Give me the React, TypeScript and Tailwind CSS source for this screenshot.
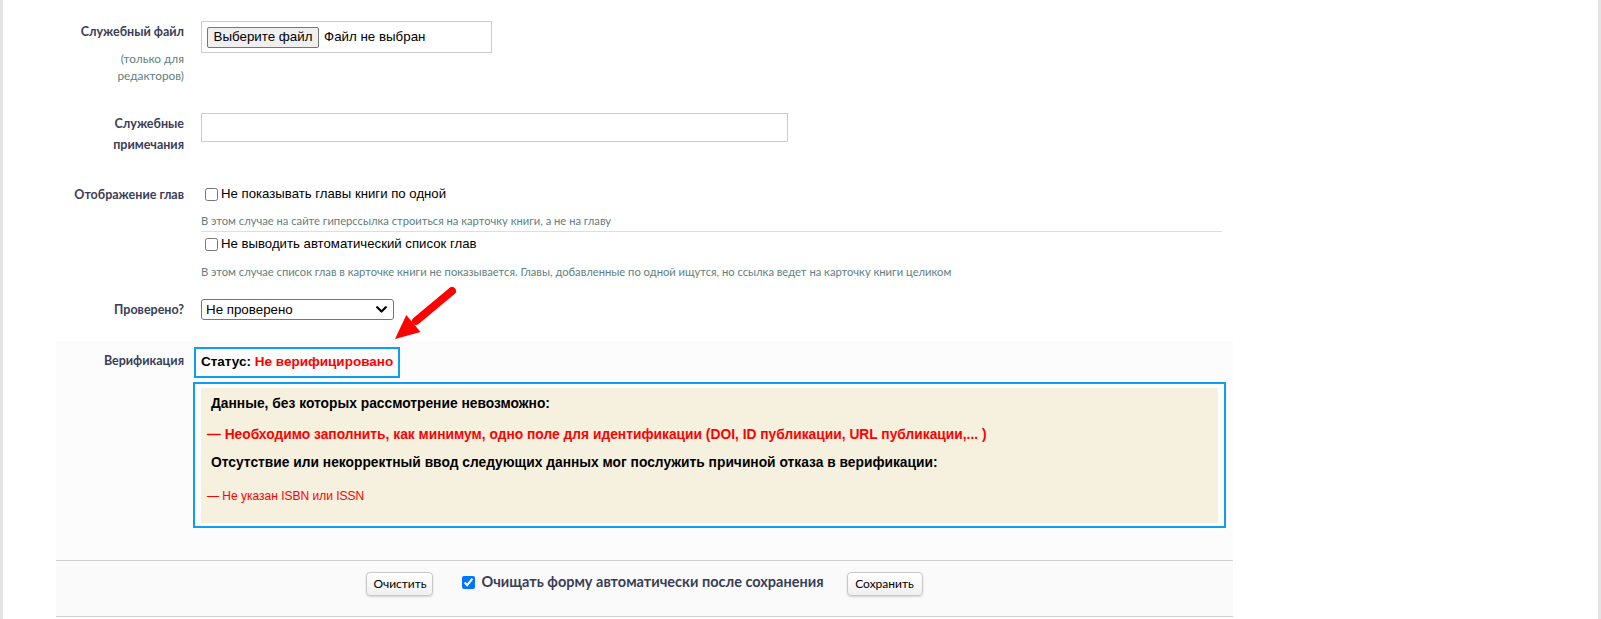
import React from "react";

const labelCls =
  "font-['Lato','Open_Sans',sans-serif] font-bold text-[12.5px] text-[#393d56]";
const helpCls =
  "font-['Lato','Open_Sans',sans-serif] text-[11.2px] leading-[16px] text-[#5e7f7f]";
const btnCls =
  "h-[24px] border border-[#c8c8c8] rounded-[4px] bg-gradient-to-b from-white to-[#f0f0f0] shadow-[0_1px_2px_rgba(0,0,0,0.15)] font-['Lato','Open_Sans',sans-serif] text-[12px] text-black flex items-center justify-center";

export default function App() {
  return (
    <div className="relative min-h-[619px] w-full bg-white border-l-[3px] border-r-[3px] border-[#e4e4e4] font-['Liberation_Sans',Arial,sans-serif] text-black">
      <div className="ml-[53px] w-[1177px]">
        {/* Row 1 */}
        <div className="flex pt-[21px]">
          <div className="w-[145px] pr-[17px] pt-[1px] text-right">
            <div className={`${labelCls} leading-[20px]`}>Служебный файл</div>
            <div className="mt-[8px] font-['Lato','Open_Sans',sans-serif] text-[11.8px] leading-[17px] text-[#5e7f7f]">
              (только для
              <br />
              редакторов)
            </div>
          </div>
          <div>
            <div className="w-[291px] h-[32px] border border-[#cccccc] flex items-center pl-[5px] text-[13.33px]">
              <span className="h-[21px] w-[112px] border border-[#767676] bg-[#efefef] rounded-[2px] flex items-center justify-center">
                Выберите файл
              </span>
              <span className="ml-[5px]">Файл не выбран</span>
            </div>
          </div>
        </div>

        {/* Row 2 */}
        <div className="flex mt-[29px]">
          <div className="w-[145px] pr-[17px] pt-[1px] text-right">
            <div className={`${labelCls} leading-[20.5px]`}>
              Служебные
              <br />
              примечания
            </div>
          </div>
          <div className="w-[587px] h-[29px] border border-[#cccccc] bg-white" />
        </div>

        {/* Row 3 */}
        <div className="flex mt-[29px]">
          <div className="w-[145px] pr-[17px] pt-[1px] text-right">
            <div className={`${labelCls} leading-[20px]`}>Отображение глав</div>
          </div>
          <div className="w-[1021px]">
            <div className="flex items-center h-[20px] text-[13.2px]">
              <input type="checkbox" readOnly className="m-0 ml-[4px] w-[13px] h-[13px]" />
              <span className="ml-[3px]">Не показывать главы книги по одной</span>
            </div>
            <div className={`mt-[9px] ${helpCls}`}>
              В этом случае на сайте гиперссылка строиться на карточку книги, а не на главу
            </div>
            <div className="mt-[2px] border-t border-[#dedede]" />
            <div className="mt-[2px] flex items-center h-[20px] text-[13.2px]">
              <input type="checkbox" readOnly className="m-0 ml-[4px] w-[13px] h-[13px]" />
              <span className="ml-[3px]">Не выводить автоматический список глав</span>
            </div>
            <div className={`mt-[10px] ${helpCls}`}>
              В этом случае список глав в карточке книги не показывается. Главы, добавленные по одной ищутся, но ссылка ведет на карточку книги целиком
            </div>
          </div>
        </div>

        {/* Row 4 */}
        <div className="flex mt-[19px]">
          <div className="w-[145px] pr-[17px] pt-[1px] text-right">
            <div className={`${labelCls} leading-[20px]`}>Проверено?</div>
          </div>
          <div className="w-[193px] h-[21px] border border-[#767676] rounded-[3px] flex items-center justify-between pl-[4px] pr-[6px] text-[13.33px]">
            <span>Не проверено</span>
            <svg width="11" height="7" viewBox="0 0 11 7" fill="none">
              <path d="M1.2 1.2l4.3 4.3 4.3-4.3" stroke="#000" strokeWidth="2.2" strokeLinecap="round" strokeLinejoin="round" />
            </svg>
          </div>
        </div>

        {/* Verification section */}
        <div className="mt-[21px] bg-[#fcfcfc] pt-[6px] pb-[32px] flex">
          <div className="w-[138px] pr-[10px] pt-[4px] text-right">
            <div className={`${labelCls} leading-[20px]`}>Верификация</div>
          </div>
          <div>
            <div className="inline-flex items-center h-[31px] border-2 border-[#0d9ef2] px-[5px] text-[13.5px] font-bold">
              <span>Статус:&nbsp;</span>
              <span className="text-[#ff0000]">Не верифицировано</span>
            </div>
            <div className="-ml-[1px] mt-[4px] w-[1033px] border-2 border-[#0d9ef2] pl-[6px] pr-[6px] pt-[4px] pb-[3px] bg-white">
              <div className="bg-[#f6f0df] pt-[7px] pb-[18px] pl-[6px] text-[13.8px] leading-[18px]">
                <p className="pl-[4px] font-bold">Данные, без которых рассмотрение невозможно:</p>
                <p className="mt-[13px] font-bold text-[#ff0000]">
                  — Необходимо заполнить, как минимум, одно поле для идентификации (DOI, ID публикации, URL публикации,... )
                </p>
                <p className="mt-[10px] pl-[4px] font-bold">
                  Отсутствие или некорректный ввод следующих данных мог послужить причиной отказа в верификации:
                </p>
                <p className="mt-[15px] text-[12px] text-[#ff0000]">— Не указан ISBN или ISSN</p>
              </div>
            </div>
          </div>
        </div>

        {/* Footer */}
        <div className="h-[57px] border-t border-b border-[#d0d0d0] bg-[#fafafa] flex justify-center items-start pt-[11px]">
          <button className={`${btnCls} w-[67px]`}>Очистить</button>
          <div className="ml-[29px] h-[20px] flex items-center">
            <input type="checkbox" checked readOnly className="m-0 w-[13px] h-[13px]" />
            <span className="ml-[6px] font-['Lato','Open_Sans',sans-serif] font-bold text-[14.5px] text-[#393d56]">
              Очищать форму автоматически после сохранения
            </span>
          </div>
          <button className={`${btnCls} ml-[23px] w-[76px]`}>Сохранить</button>
        </div>
      </div>

      {/* Red annotation arrow */}
      <svg className="absolute left-[382px] top-[280px]" width="80" height="70" viewBox="0 0 80 70">
        <line x1="67" y1="11" x2="31" y2="41" stroke="#ff0000" strokeWidth="8" strokeLinecap="round" />
        <polygon points="10,59 35.5,51.9 21.3,35.1" fill="#ff0000" />
      </svg>
    </div>
  );
}
